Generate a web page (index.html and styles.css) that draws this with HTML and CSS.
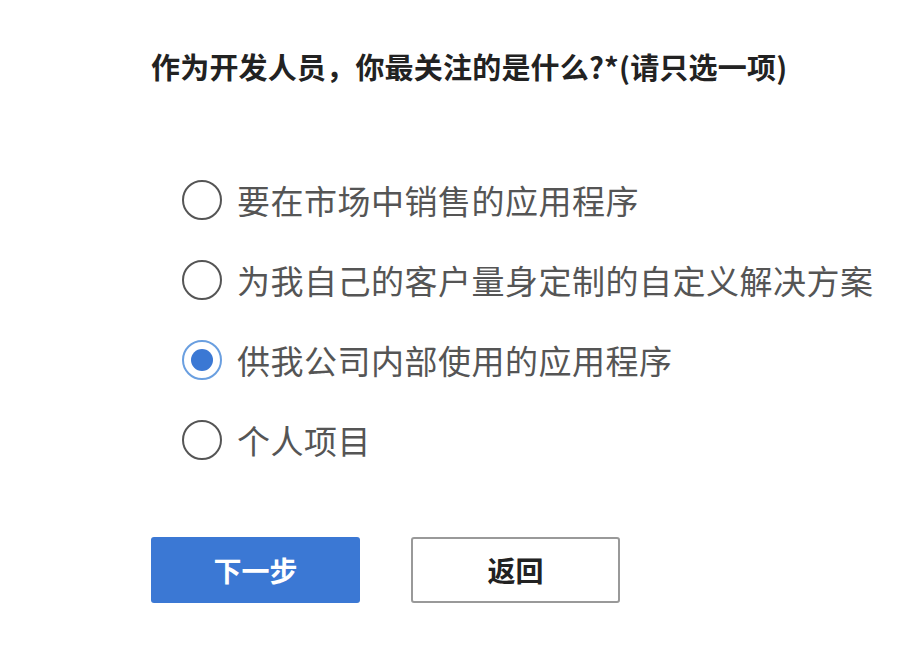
FILE: index.html
```html
<!DOCTYPE html>
<html lang="zh-CN">
<head>
  <meta charset="UTF-8" />
  <title>开发人员调查</title>
  <link rel="stylesheet" href="styles.css">
</head>
<body>
  <div class="survey">
    <h1 class="question">作为开发人员，你最关注的是什么?*(请只选一项)</h1>

    <div class="options">
      <label class="option"><input type="radio" name="focus" value="market"><span>要在市场中销售的应用程序</span></label>
      <label class="option"><input type="radio" name="focus" value="custom"><span>为我自己的客户量身定制的自定义解决方案</span></label>
      <label class="option"><input type="radio" name="focus" value="internal" checked><span>供我公司内部使用的应用程序</span></label>
      <label class="option"><input type="radio" name="focus" value="personal"><span>个人项目</span></label>
    </div>

    <div class="actions">
      <button class="btn btn-primary">下一步</button>
      <button class="btn btn-secondary">返回</button>
    </div>
  </div>
</body>
</html>
```

FILE: styles.css
```css
body {
  margin: 0;
  background: #fff;
  font-family: "Noto Sans CJK SC", "Noto Sans", sans-serif;
  color: #444;
}
.survey {
  padding: 48px 0 0 151px;
}
.question {
  margin: 0;
  font-size: 29px;
  line-height: 36px;
  font-weight: bold;
  color: #222;
  letter-spacing: 0.2px;
}
.options {
  margin-top: 76px;
  padding-left: 31px;
}
.option {
  display: flex;
  align-items: center;
  height: 80px;
  font-size: 33px;
  letter-spacing: 0.5px;
  color: #555;
  cursor: pointer;
}
.option input {
  appearance: none;
  -webkit-appearance: none;
  margin: 0 15px 0 0;
  width: 40px;
  height: 40px;
  border: 2px solid #555;
  border-radius: 50%;
  box-sizing: border-box;
  display: grid;
  place-content: center;
  flex-shrink: 0;
}
.option input:checked {
  border-color: #6a9fe0;
}
.option input:checked::before {
  content: "";
  width: 22px;
  height: 22px;
  border-radius: 50%;
  background: #3b78d4;
}
.actions {
  display: flex;
  gap: 51px;
  margin-top: 57px;
}
.btn {
  width: 209px;
  height: 66px;
  border-radius: 3px;
  font-family: inherit;
  font-size: 28px;
  font-weight: bold;
  cursor: pointer;
}
.btn-primary {
  background: #3b78d4;
  border: none;
  color: #fff;
}
.btn-secondary {
  background: #fff;
  border: 2px solid #999;
  color: #222;
}
```
